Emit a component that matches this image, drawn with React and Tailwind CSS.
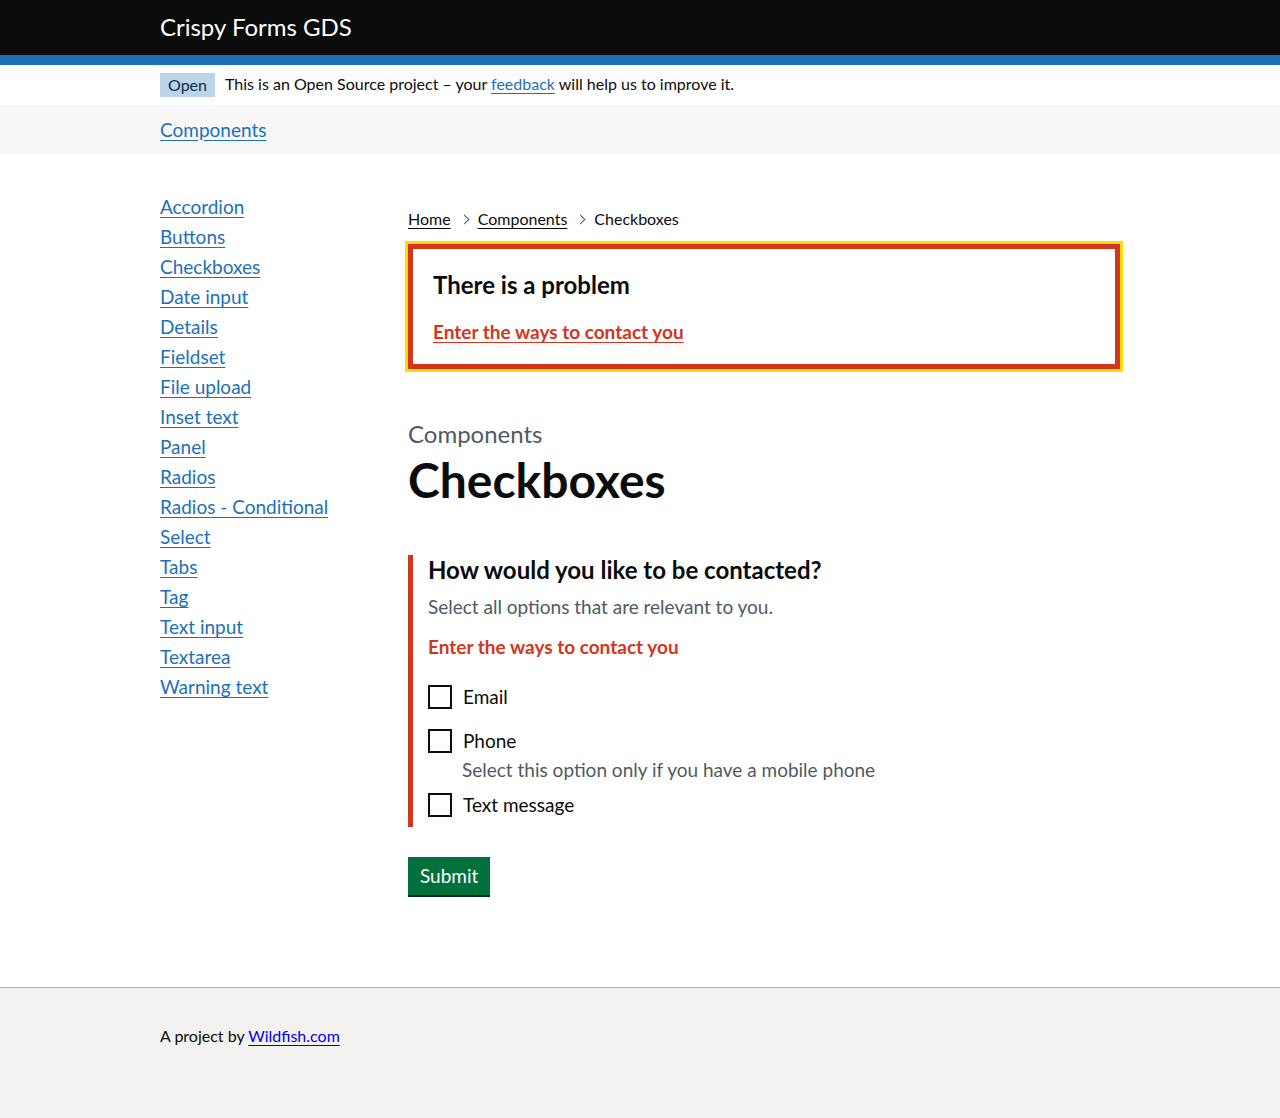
const NAV_ITEMS = [
  'Accordion',
  'Buttons',
  'Checkboxes',
  'Date input',
  'Details',
  'Fieldset',
  'File upload',
  'Inset text',
  'Panel',
  'Radios',
  'Radios - Conditional',
  'Select',
  'Tabs',
  'Tag',
  'Text input',
  'Textarea',
  'Warning text',
];

const FONT = "font-['Lato','Liberation_Sans',sans-serif]";

const Chevron = () => (
  <span className="mx-[10px] inline-block h-[7px] w-[7px] rotate-45 border-t border-r border-[#505a5f]"></span>
);

const Checkbox = ({ label, hint }) => (
  <div>
    <div className="flex h-6 items-center gap-[11px]">
      <span className="h-6 w-6 shrink-0 border-2 border-[#0b0c0c] bg-white"></span>
      <span className="text-[19px] leading-6">{label}</span>
    </div>
    {hint && (
      <p className="mt-1 pl-[34px] text-[19px] leading-[25px] text-[#505a5f]">{hint}</p>
    )}
  </div>
);

export default function App() {
  return (
    <div className={`${FONT} min-h-[1118px] bg-white text-[#0b0c0c] flex flex-col`}>
      {/* Header */}
      <header className="bg-[#0b0c0c]">
        <div className="mx-auto w-[960px] h-[55px] flex items-center pb-[2px]">
          <span className="text-[24px] leading-[30px] text-white">Crispy Forms GDS</span>
        </div>
        <div className="h-[10px] bg-[#1d70b8]"></div>
      </header>

      {/* Phase banner */}
      <div className="mx-auto w-[960px] h-10 flex items-center gap-[10px]">
        <strong className="bg-[#bbd4ea] px-2 h-6 flex items-center pb-[1px] text-[16px] font-normal text-[#0c2d4a]">Open</strong>
        <span className="text-[16px] leading-5 -mt-[2px]">
          This is an Open Source project – your{' '}
          <a href="#" className="text-[#1d70b8] underline underline-offset-[3px]">feedback</a>{' '}
          will help us to improve it.
        </span>
      </div>

      {/* Top nav */}
      <div className="bg-[#f8f8f8] h-[50px]">
        <div className="mx-auto w-[960px] h-full flex items-center pb-[2px]">
          <a href="#" className="text-[19px] leading-[25px] text-[#1d70b8] underline underline-offset-[3px]">Components</a>
        </div>
      </div>

      {/* Main */}
      <main className="mx-auto w-[960px] flex pt-10 pb-[92px] flex-1">
        <nav className="w-[248px] shrink-0 -mt-px">
          <ul className="flex flex-col gap-[5px]">
            {NAV_ITEMS.map((item) => (
              <li key={item} className="text-[19px] leading-[25px] h-[25px]">
                <a href="#" className="text-[#1d70b8] underline underline-offset-[3px]">{item}</a>
              </li>
            ))}
          </ul>
        </nav>

        <div className="w-[712px]">
          {/* Breadcrumbs */}
          <div className="mt-[14px] h-5 flex items-center text-[16px] leading-5">
            <a href="#" className="underline underline-offset-[3px]">Home</a>
            <Chevron />
            <a href="#" className="underline underline-offset-[3px]">Components</a>
            <Chevron />
            <span>Checkboxes</span>
          </div>

          {/* Error summary */}
          <div className="mt-[15px] border-[5px] border-[#d4351c] outline-[3px] outline-solid outline-[#ffdd00] px-5 pt-[21px] pb-5">
            <h2 className="text-[24px] leading-[30px] font-bold">There is a problem</h2>
            <a href="#" className="mt-[19px] block text-[19px] leading-[25px] font-bold text-[#d4351c] underline underline-offset-[3px]">
              Enter the ways to contact you
            </a>
          </div>

          {/* Heading */}
          <p className="mt-[50px] text-[24px] leading-[30px] text-[#505a5f]">Components</p>
          <h1 className="mt-[6px] text-[48px] leading-[50px] font-bold">Checkboxes</h1>

          {/* Fieldset */}
          <fieldset className="mt-[50px] border-l-[5px] border-[#d4351c] pl-[15px] pb-[10px]">
            <h2 className="text-[24px] leading-[30px] font-bold">How would you like to be contacted?</h2>
            <p className="mt-[9px] text-[19px] leading-[25px] text-[#505a5f]">Select all options that are relevant to you.</p>
            <p className="mt-[15px] text-[19px] leading-[25px] font-bold text-[#d4351c]">Enter the ways to contact you</p>
            <div className="mt-[26px] flex flex-col">
              <Checkbox label="Email" />
              <div className="mt-5">
                <Checkbox label="Phone" hint="Select this option only if you have a mobile phone" />
              </div>
              <div className="mt-[11px]">
                <Checkbox label="Text message" />
              </div>
            </div>
          </fieldset>

          <button className="mt-[30px] bg-[#00703c] px-3 h-[38px] text-[19px] text-white shadow-[0_2px_0_#002d18]">
            Submit
          </button>
        </div>
      </main>

      {/* Footer */}
      <footer className="border-t border-[#b1b4b6] bg-[#f3f2f1] h-[131px]">
        <div className="mx-auto w-[960px] pt-[38px] text-[16px] leading-5">
          A project by <a href="#" className="text-[#0000ee] underline underline-offset-[3px]">Wildfish.com</a>
        </div>
      </footer>
    </div>
  );
}
